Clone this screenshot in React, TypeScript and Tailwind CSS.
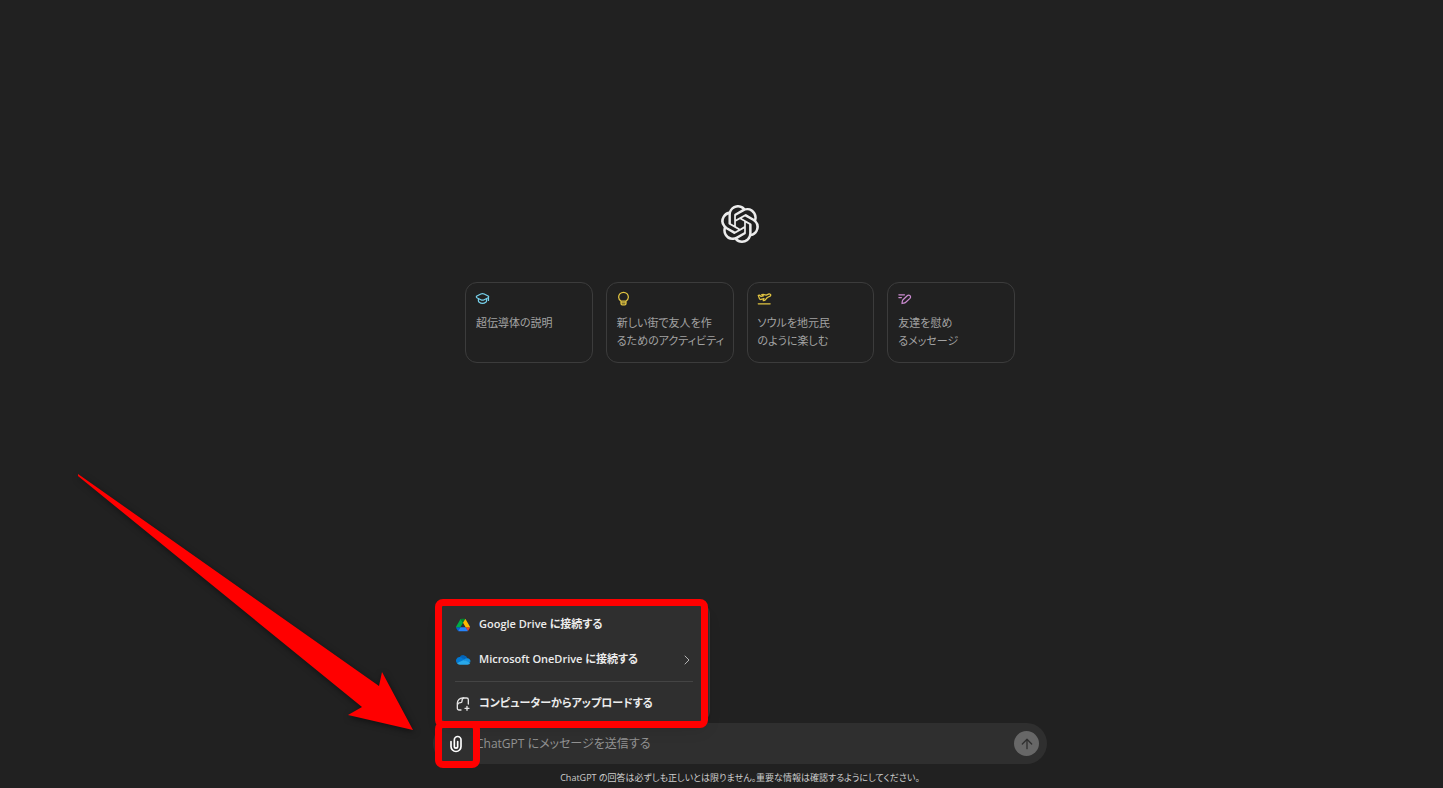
import type { ReactNode } from "react";
import { ArrowUp, ChevronRight } from "lucide-react";
import { SiOpenai } from "react-icons/si";

function CapIcon() {
  return (
    <svg viewBox="0 0 24 24" className="size-[15px] text-[#76d0eb]" fill="none" stroke="currentColor" strokeWidth="2" strokeLinejoin="round" strokeLinecap="round" aria-hidden="true">
      <path d="M12 4c-1 0-1.900.3-2.700.7L3 8c-1.100.7-1.100 2 0 2.700l6.300 3.200c1.700.9 3.700.9 5.400 0L21 10.700c1.100-.7 1.100-2 0-2.700l-6.300-3.300c-.8-.4-1.700-.7-2.700-.7z" />
      <path d="M21.500 10v5M5.500 12.500v3.500c0 .7.3 1.200.8 1.600 3.500 2.900 7.900 2.900 11.400 0 .5-.4.8-.9.8-1.600v-3.500" />
    </svg>
  );
}

function BulbIcon() {
  return (
    <svg viewBox="0 0 24 24" className="size-[15px] text-[#e2c541]" fill="none" stroke="currentColor" strokeWidth="2" strokeLinejoin="round" aria-hidden="true">
      <path d="M12 2a7.800 7.800 0 0 0-7.800 7.800c0 3 1.800 4.700 3.800 6.400h8c2-1.700 3.800-3.400 3.800-6.400A7.800 7.800 0 0 0 12 2zM8 16v4c0 1.200.8 2 2 2h4c1.200 0 2-.8 2-2V16M8 19h8" />
    </svg>
  );
}

function PlaneIcon() {
  return (
    <svg viewBox="0 0 24 24" className="size-[15px] text-[#e2c541]" fill="none" stroke="currentColor" strokeWidth="2" strokeLinejoin="round" strokeLinecap="round" aria-hidden="true">
      <path d="M2 20.500h19" />
      <path d="M2 7l2.300-.4 2.200 2.200 3.700-.8-3-2 2.500-.7 5 1.200 3.700-1.500c1.500-.6 3.100 0 3.500 1 .4 1.100-.4 2-1.700 2.700l-3.700 1.700-4 4.600-2.500.5 1.200-3.500-4.700 1.500c-1.200.3-2 0-2.500-1z" />
    </svg>
  );
}

function PenIcon() {
  return (
    <svg viewBox="0 0 24 24" className="size-[15px] text-[#cb8bd0]" fill="none" stroke="currentColor" strokeWidth="2" strokeLinejoin="round" strokeLinecap="round" aria-hidden="true">
      <path d="M3 6h9M3 10.500h4" />
      <path d="M10.500 19.500l-2.500.5.500-3.500c.1-.9.500-1.700 1.200-2.400l6.700-6.600c1.300-1.300 3.200-1.300 4.400-.1 1.200 1.200 1.200 3.100-.1 4.400L14 18c-.9.900-2.100 1.300-3.500 1.500z" />
    </svg>
  );
}

function DriveIcon() {
  return (
    <svg viewBox="0 0 87 78" className="size-[14px]" aria-hidden="true">
      <path fill="#0066da" d="M6.600 66.850l3.850 6.650c.8 1.400 1.950 2.500 3.300 3.300L27.500 53H0c0 1.550.4 3.100 1.200 4.500z" />
      <path fill="#00ac47" d="M43.650 25L29.900 1.200c-1.350.8-2.500 1.900-3.300 3.300L1.200 48.500C.4 49.900 0 51.450 0 53h27.500z" />
      <path fill="#ea4335" d="M73.550 76.800c1.350-.8 2.500-1.900 3.300-3.300l1.600-2.750 7.650-13.250c.8-1.400 1.200-2.950 1.200-4.500H59.800l5.850 11.500z" />
      <path fill="#00832d" d="M43.650 25L57.400 1.200C56.050.4 54.500 0 52.900 0H34.400c-1.600 0-3.150.45-4.500 1.200z" />
      <path fill="#2684fc" d="M59.800 53H27.500L13.750 76.800c1.350.8 2.900 1.200 4.500 1.200h50.800c1.600 0 3.150-.45 4.500-1.200z" />
      <path fill="#ffba00" d="M73.400 26.500L60.700 4.500c-.8-1.400-1.950-2.500-3.300-3.300L43.650 25 59.800 53h27.450c0-1.550-.4-3.100-1.200-4.500z" />
    </svg>
  );
}

function OneDriveIcon() {
  return (
    <svg viewBox="0 0 35 24" className="h-[10px] w-[15px]" aria-hidden="true">
      <path fill="#0364b8" d="M12 7l8 4.500 7-3.500A10.500 10.500 0 0 0 7.700 5.700z" />
      <path fill="#0078d4" d="M14 7A8.500 8.500 0 0 0 8.500 5 8.600 8.600 0 0 0 1.500 19l13-4 7-4z" />
      <path fill="#1490df" d="M26.500 8c-2.500-.4-4.500.7-6.500 2l-2.500 1.500L25 18l9.300-2A7.500 7.500 0 0 0 26.500 8z" />
      <path fill="#28a8ea" d="M18 12L1.500 19a8.500 8.500 0 0 0 7 4.500h18a7.700 7.700 0 0 0 7.500-5z" />
    </svg>
  );
}

function UploadFileIcon() {
  return (
    <svg viewBox="0 0 24 24" className="size-4 text-[#e3e3e3]" fill="none" stroke="currentColor" strokeWidth="2" strokeLinecap="round" strokeLinejoin="round" aria-hidden="true">
      <path d="M20 12V5.500A2.500 2.500 0 0 0 17.500 3h-6c-4.500 0-8 3.500-8 8v7.500A2.500 2.500 0 0 0 6 21h3" />
      <path d="M4 12.500C4.500 10.500 6 10 8.500 10c1.500 0 2-.5 2-2 0-2.500.5-4.500 2.500-5" />
      <path d="M18 15.500v6M15 18.500h6" />
    </svg>
  );
}

function ClipIcon() {
  return (
    <svg viewBox="0 0 24 24" className="size-5 text-white" fill="currentColor" aria-hidden="true">
      <path fillRule="evenodd" clipRule="evenodd" d="M9 7a5 5 0 0 1 10 0v8a7 7 0 1 1-14 0V9a1 1 0 0 1 2 0v6a5 5 0 0 0 10 0V7a3 3 0 1 0-6 0v8a1 1 0 1 0 2 0V9a1 1 0 1 1 2 0v6a3 3 0 1 1-6 0z" />
    </svg>
  );
}

const suggestions: { icon: ReactNode; lines: string[] }[] = [
  { icon: <CapIcon />, lines: ["超伝導体の説明"] },
  { icon: <BulbIcon />, lines: ["新しい街で友人を作", "るためのアクティビティ"] },
  { icon: <PlaneIcon />, lines: ["ソウルを地元民", "のように楽しむ"] },
  { icon: <PenIcon />, lines: ["友達を慰め", "るメッセージ"] },
];

function AttachMenu() {
  return (
    <div role="menu" className="absolute bottom-full left-1 flex w-[273px] flex-col rounded-xl border border-[#3a3a3a] bg-[#2f2f2f] pt-1 pr-4 pb-px pl-[17px] text-[11px] font-semibold text-[#ececec] shadow-lg">
      <button type="button" role="menuitem" className="flex h-[35px] items-center gap-2 whitespace-nowrap">
        <span className="flex w-4 justify-center"><DriveIcon /></span>
        Google Drive に接続する
      </button>
      <button type="button" role="menuitem" className="flex h-[35px] items-center gap-2 whitespace-nowrap">
        <span className="flex w-4 justify-center"><OneDriveIcon /></span>
        Microsoft OneDrive に接続する
        <ChevronRight className="-mr-0.5 ml-auto size-4 text-[#b4b4b4]" strokeWidth={1.5} />
      </button>
      <hr className="my-1 border-[#444444]" />
      <button type="button" role="menuitem" className="flex h-[35px] items-center gap-2 whitespace-nowrap">
        <span className="flex w-4 justify-center"><UploadFileIcon /></span>
        コンピューターからアップロードする
      </button>
    </div>
  );
}

function Annotations() {
  return (
    <div className="pointer-events-none" aria-hidden="true">
      <div className="absolute -top-[124px] left-[2px] h-[129px] w-[273px] rounded-lg border-[7px] border-[#ff0000]" />
      <div className="absolute -top-[2px] left-[2px] h-[47px] w-[45px] rounded-lg border-[7px] border-[#ff0000]" />
      <svg viewBox="0 0 350 270" className="absolute right-full bottom-[24px] mr-[11px] h-[270px] w-[350px] drop-shadow-[1px_2px_3px_rgba(0,0,0,0.5)]">
        <path fill="#ff0000" d="M6 4L307 216L310 202L341 260L276 245L290 237L6 6z" />
      </svg>
    </div>
  );
}

export default function App() {
  return (
    <div className="flex min-h-screen flex-col overflow-hidden bg-[#212121] pl-[37px] font-['Open_Sans','Noto_Sans_CJK_JP',sans-serif] [font-feature-settings:'palt']">
      <main className="flex flex-1 flex-col items-center justify-center px-4 pb-[155px]">
        <SiOpenai className="size-[38px] text-[#ececec]" aria-label="ChatGPT" />
        <div className="mt-[39px] grid w-full max-w-[550px] grid-cols-4 gap-[13px]">
          {suggestions.map((s) => (
            <button key={s.lines[0]} type="button" className="flex h-[81px] flex-col items-start rounded-xl border border-[#3c3c3c] px-[9px] pt-2 text-left text-[11px] leading-[18px] text-[#a3a3a3]">
              {s.icon}
              <span className="mt-2 pl-px">
                {s.lines.map((line) => (
                  <span key={line} className="block whitespace-nowrap">{line}</span>
                ))}
              </span>
            </button>
          ))}
        </div>
      </main>
      <div className="mx-auto w-full max-w-[614px]">
        <form className="relative flex h-[41px] items-center rounded-full bg-[#2f2f2f] pr-2 pl-[13px]" onSubmit={(e) => e.preventDefault()}>
          <button type="button" aria-label="ファイルを添付" className="flex size-5 items-center justify-center">
            <ClipIcon />
          </button>
          <input type="text" aria-label="メッセージ" placeholder="ChatGPT にメッセージを送信する" className="ml-[10px] min-w-0 flex-1 bg-transparent text-xs text-[#ececec] outline-none placeholder:text-[#929292]" />
          <button type="submit" aria-label="送信" className="flex size-[25px] items-center justify-center rounded-full bg-[#676767] text-[#2f2f2f]">
            <ArrowUp className="size-4" strokeWidth={2} />
          </button>
          <AttachMenu />
          <Annotations />
        </form>
        <p className="flex h-6 items-center justify-center pt-1 text-[9px] whitespace-nowrap text-[#cdcdcd]">
          ChatGPT の回答は必ずしも正しいとは限りません。重要な情報は確認するようにしてください。
        </p>
      </div>
    </div>
  );
}
